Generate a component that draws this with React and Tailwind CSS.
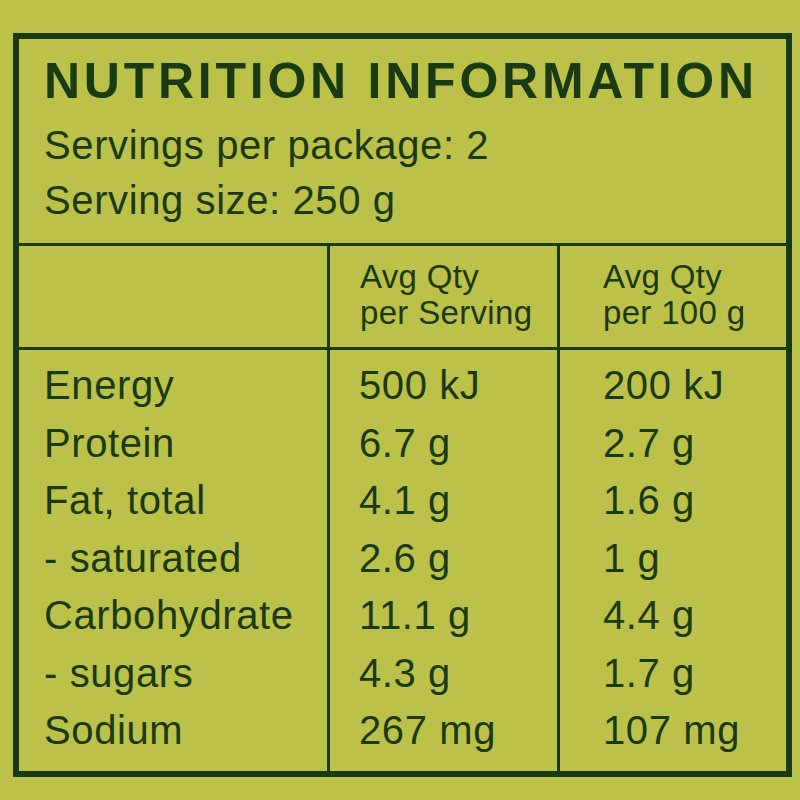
import React from 'react';

const rows = [
  ['Energy', '500 kJ', '200 kJ'],
  ['Protein', '6.7 g', '2.7 g'],
  ['Fat, total', '4.1 g', '1.6 g'],
  ['- saturated', '2.6 g', '1 g'],
  ['Carbohydrate', '11.1 g', '4.4 g'],
  ['- sugars', '4.3 g', '1.7 g'],
  ['Sodium', '267 mg', '107 mg'],
];

function Column({ items, className }) {
  return (
    <div className={`flex flex-col pt-[7px] ${className}`}>
      {items.map((item, i) => (
        <div key={i} className="text-[40px] leading-[57.5px] tracking-[0.015em] whitespace-nowrap">
          {item}
        </div>
      ))}
    </div>
  );
}

export default function App() {
  return (
    <div
      className="w-[800px] h-[800px] bg-[#bcc14a] text-[#1a3a14] pt-[33px] pl-[13px]"
      style={{ fontFamily: '"Liberation Sans", Arial, sans-serif' }}
    >
      <div className="w-[779px] h-[744px] border-[6px] border-[#1a3a14] flex flex-col">
        {/* Title block */}
        <div className="h-[207px] shrink-0 pl-[25px] pt-[17px] border-b-[3px] border-[#1a3a14]">
          <h1 className="text-[50px] leading-[50px] font-bold tracking-[0.075em] whitespace-nowrap">
            NUTRITION INFORMATION
          </h1>
          <div className="mt-[12px] text-[40px] leading-[55px] tracking-[0.015em]">
            <p>Servings per package: 2</p>
            <p>Serving size: 250 g</p>
          </div>
        </div>

        {/* Header row */}
        <div className="flex h-[104px] shrink-0 border-b-[3px] border-[#1a3a14]">
          <div className="w-[311px] border-r-[3px] border-[#1a3a14]" />
          <div className="w-[230px] border-r-[3px] border-[#1a3a14] pl-[30px] pt-[13px] text-[33px] leading-[36px] tracking-[0.01em]">
            <p>Avg Qty</p>
            <p>per Serving</p>
          </div>
          <div className="flex-1 pl-[43px] pt-[13px] text-[33px] leading-[36px] tracking-[0.01em]">
            <p>Avg Qty</p>
            <p>per 100 g</p>
          </div>
        </div>

        {/* Body */}
        <div className="flex flex-1">
          <Column items={rows.map((r) => r[0])} className="w-[311px] border-r-[3px] border-[#1a3a14] pl-[25px]" />
          <Column items={rows.map((r) => r[1])} className="w-[230px] border-r-[3px] border-[#1a3a14] pl-[29px]" />
          <Column items={rows.map((r) => r[2])} className="flex-1 pl-[43px]" />
        </div>
      </div>
    </div>
  );
}
